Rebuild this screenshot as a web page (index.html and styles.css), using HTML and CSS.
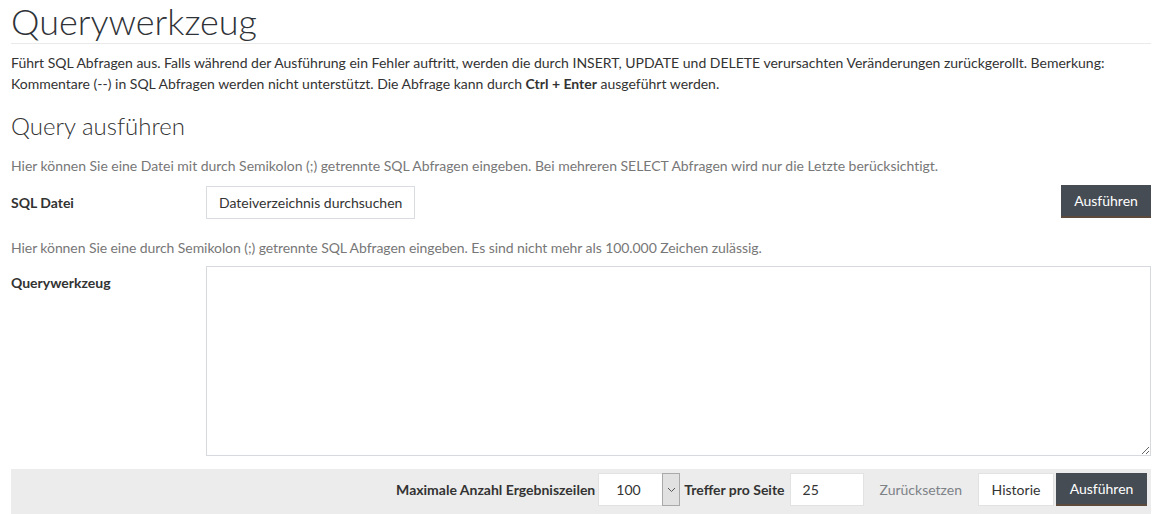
FILE: index.html
```html
<!DOCTYPE html>
<html lang="de">
<head>
<meta charset="utf-8">
<title>Querywerkzeug</title>
<link rel="stylesheet" href="styles.css">
</head>
<body>
<div class="page">
  <h1 class="title">Querywerkzeug</h1>
  <p class="intro">Führt SQL Abfragen aus. Falls während der Ausführung ein Fehler auftritt, werden die durch INSERT, UPDATE und DELETE verursachten Veränderungen zurückgerollt. Bemerkung: Kommentare (--) in SQL Abfragen werden nicht unterstützt. Die Abfrage kann durch <b>Ctrl + Enter</b> ausgeführt werden.</p>
  <h2 class="subtitle">Query ausführen</h2>
  <p class="hint">Hier können Sie eine Datei mit durch Semikolon (;) getrennte SQL Abfragen eingeben. Bei mehreren SELECT Abfragen wird nur die Letzte berücksichtigt.</p>
  <div class="row file-row">
    <label class="label">SQL Datei</label>
    <button class="btn btn-light">Dateiverzeichnis durchsuchen</button>
    <span class="spacer"></span>
    <button class="btn btn-dark">Ausführen</button>
  </div>
  <p class="hint hint2">Hier können Sie eine durch Semikolon (;) getrennte SQL Abfragen eingeben. Es sind nicht mehr als 100.000 Zeichen zulässig.</p>
  <div class="row query-row">
    <label class="label label-top">Querywerkzeug</label>
    <textarea class="query"></textarea>
  </div>
  <div class="toolbar">
    <span class="tb-label">Maximale Anzahl Ergebniszeilen</span>
    <div class="select">
      <span class="select-value">100</span>
      <span class="select-arrow"><svg width="9" height="6" viewBox="0 0 9 6"><path d="M1 1 L4.5 4.5 L8 1" fill="none" stroke="#555" stroke-width="1"/></svg></span>
    </div>
    <span class="tb-label">Treffer pro Seite</span>
    <input class="num" type="text" value="25">
    <span class="reset">Zurücksetzen</span>
    <button class="btn btn-white">Historie</button>
    <button class="btn btn-dark btn-dark2">Ausführen</button>
  </div>
</div>
</body>
</html>
```
FILE: styles.css
```css
* { box-sizing: border-box; }
body {
  margin: 0;
  font-family: Lato, "Open Sans", sans-serif;
  font-size: 14px;
  color: #333;
  background: #fff;
}
.page {
  padding: 0 7px 0 11px;
}
.title {
  margin: 0;
  padding-top: 1px;
  font-weight: 300;
  font-size: 36px;
  line-height: 40px;
  color: #2f3338;
  border-bottom: 1px solid #eaeaea;
  height: 44px;
}
.intro {
  margin: 8px 0 0;
  line-height: 21px;
}
.subtitle {
  margin: 18px 0 0;
  font-weight: 300;
  font-size: 24px;
  line-height: 28px;
  color: #333;
}
.hint {
  margin: 16px 0 0;
  color: #777;
  line-height: 20px;
  letter-spacing: -0.02px;
}
.row {
  display: flex;
  align-items: center;
}
.file-row {
  margin-top: 10px;
  height: 33px;
}
.label {
  width: 195px;
  font-weight: 700;
  flex: none;
}
.spacer { flex: 1; }
.btn {
  font-family: Lato, "Open Sans", sans-serif;
  font-size: 14px;
  height: 33px;
  padding: 0 12px;
  cursor: pointer;
}
.btn-light {
  background: #fff;
  border: 1px solid #d9dde2;
  color: #333;
  height: 33px;
}
.btn-dark {
  background: #454c53;
  color: #fff;
  border: none;
  border-bottom: 2px solid #5c4b3c;
  width: 90px;
  padding: 0;
  margin-top: -2px;
}
.hint2 { margin-top: 19px; letter-spacing: -0.07px; }
.query-row {
  margin-top: 8px;
  align-items: flex-start;
}
.label-top { padding-top: 8px; }
.query {
  flex: 1;
  height: 190px;
  border: 1px solid #d6dadf;
  resize: vertical;
  margin: 0;
}
.toolbar {
  margin-top: 13px;
  background: #ececec;
  height: 46px;
  display: flex;
  align-items: flex-start;
  justify-content: flex-end;
  padding: 4px 4px 0 0;
  gap: 0;
}
.tb-label {
  font-weight: 700;
  line-height: 33px;
  margin-right: 3px;
}
.select {
  display: flex;
  width: 82px;
  height: 33px;
  background: #fff;
  border: 1px solid #e2e2e2;
  margin-right: 4px;
}
.select-value {
  flex: 1;
  line-height: 31px;
  padding-left: 17px;
  color: #333;
}
.select-arrow {
  width: 18px;
  background: #e1e1e1;
  border: 1px solid #a9a9a9;
  margin: -1px -1px -1px 0;
  display: flex;
  align-items: center;
  justify-content: center;
}
.num {
  width: 74px;
  height: 33px;
  border: 1px solid #e2e2e2;
  padding: 0 0 0 12px;
  font-family: Lato, "Open Sans", sans-serif;
  font-size: 14px;
  color: #333;
  margin-left: 2px;
}
.reset {
  line-height: 33px;
  color: #7d8287;
  margin-left: 16px;
  margin-right: 16px;
}
.btn-white {
  background: #fff;
  border: 1px solid #e2e2e2;
  color: #333;
  width: 76px;
  padding: 0;
}
.btn-dark2 {
  margin-top: 0;
  margin-left: 2px;
  width: 91px;
}
```
